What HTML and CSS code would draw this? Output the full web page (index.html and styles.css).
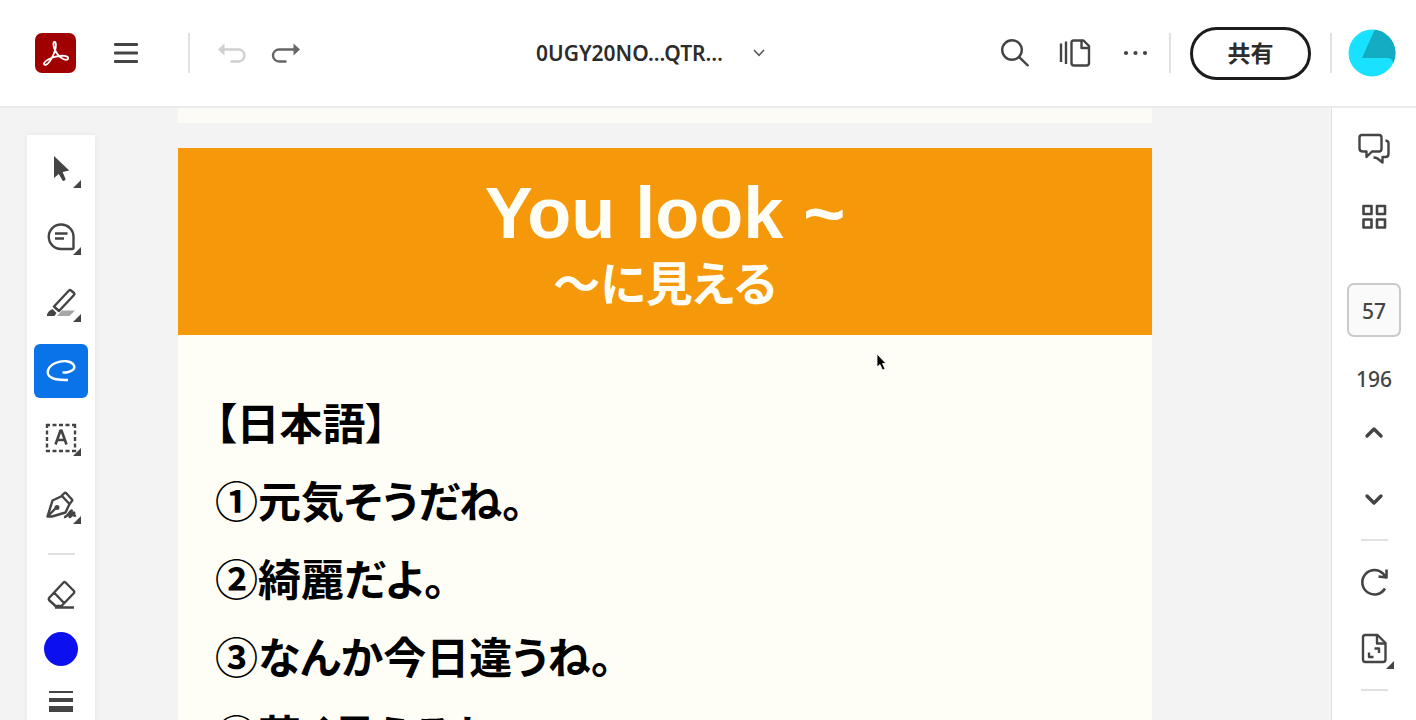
FILE: index.html
```html
<!DOCTYPE html>
<html lang="ja">
<head>
    <meta charset="UTF-8">
    <meta name="viewport" content="width=device-width, initial-scale=1.0">
    <title>0UGY20NO...QTR…</title>
    <link rel="stylesheet" href="styles.css">
</head>
<body>
    <header class="topbar">
        <a class="logo" href="#" aria-label="Acrobat">
            <svg width="41" height="40" viewBox="0 0 41 40">
                <rect width="41" height="40" rx="7" fill="#a00000"/>
                <path d="M19.5 9C17.6 9 18.4 14 20.2 17.5C21.8 20.6 25.5 25 29 26.3C31.5 27.1 33.6 26.6 33.2 24.8C32.5 22.4 26.5 22.4 22 23.4C17 24.4 10.5 27.2 9.2 29.8C8.5 31.2 9.7 32.2 11.2 31.7C14.2 30.5 18.2 23.3 20 17.5C21.2 13.6 21.4 9.3 19.5 9Z" fill="none" stroke="#fff" stroke-width="1.8"/>
            </svg>
        </a>
        <button class="icon-btn menu" aria-label="メニュー">
            <svg width="24" height="22" viewBox="0 0 24 22" fill="#444">
                <rect y="1" width="24" height="3" rx="1"/>
                <rect y="9.5" width="24" height="3" rx="1"/>
                <rect y="18" width="24" height="3" rx="1"/>
            </svg>
        </button>
        <span class="separator"></span>
        <button class="icon-btn undo" aria-label="元に戻す">
            <svg width="30" height="22" viewBox="0 0 30 22">
                <path d="M6 7.5H21.5A5.8 5.8 0 0 1 21.5 19.5H14.5" fill="none" stroke="currentColor" stroke-width="2.4" stroke-linecap="round"/>
                <path d="M1 7.5L7.5 1.5V13.5Z" fill="currentColor"/>
            </svg>
        </button>
        <button class="icon-btn redo" aria-label="やり直し">
            <svg width="30" height="22" viewBox="0 0 30 22">
                <path d="M23 7.5H8A5.8 5.8 0 0 0 8 19.5H14.5" fill="none" stroke="currentColor" stroke-width="2.4" stroke-linecap="round"/>
                <path d="M29 7.5L22.5 1.5V13.5Z" fill="currentColor"/>
            </svg>
        </button>

        <button class="doc-title">
            <span>0UGY20NO...QTR…</span>
            <svg width="12" height="8" viewBox="0 0 12 8"><path d="M1 1L6 6.3L11 1" fill="none" stroke="#555" stroke-width="1.5"/></svg>
        </button>

        <button class="icon-btn" aria-label="検索">
            <svg width="30" height="30" viewBox="0 0 30 30" fill="none" stroke="#444" stroke-width="2.4" stroke-linecap="round">
                <circle cx="12" cy="12" r="9.8"/>
                <path d="M19.2 19.2L27.7 27.3"/>
            </svg>
        </button>
        <button class="icon-btn" aria-label="ページ">
            <svg width="32" height="30" viewBox="0 0 32 30" fill="none" stroke="#444" stroke-width="2.4" stroke-linejoin="round">
                <path d="M2 5.5V24M7 3.5V26M14.5 2.5H24.5L30 8V25Q30 27.5 27.5 27.5H15Q12.5 27.5 12.5 25V4.5Q12.5 2.5 14.5 2.5Z"/>
                <path d="M22.5 2.5V10H30"/>
            </svg>
        </button>
        <button class="icon-btn" aria-label="その他">
            <svg width="26" height="6" viewBox="0 0 26 6" fill="#444">
                <circle cx="4" cy="3" r="2.1"/><circle cx="13.5" cy="3" r="2.1"/><circle cx="23" cy="3" r="2.1"/>
            </svg>
        </button>
        <span class="separator share-separator"></span>
        <button class="share">共有</button>
        <span class="separator"></span>
        <button class="avatar" aria-label="アカウント">
            <svg width="48" height="48" viewBox="0 0 48 48">
                <clipPath id="round"><circle cx="24" cy="24" r="23.5"/></clipPath>
                <g clip-path="url(#round)">
                    <rect width="48" height="48" fill="#18e2ff"/>
                    <path d="M27 0H48V36L45 34Q44 29 40 29H14Z" fill="#13acc2"/>
                </g>
            </svg>
        </button>
    </header>

    <div class="workspace">
        <aside class="tools">
            <button class="tool" aria-label="選択">
                <svg viewBox="0 0 54 54">
                    <path d="M20 13V35L24.8 31L28.2 37Q29.2 38.4 30.6 37.6T31.4 35.4L28.6 29L35.2 27.5Z" fill="#444" stroke="none"/>
                    <path class="corner" d="M47 37V45H39Z"/>
                </svg>
            </button>
            <button class="tool" aria-label="コメント">
                <svg viewBox="0 0 54 54">
                    <path d="M27 14.5A12.2 12.2 0 0 0 27 39H38Q39.5 39 39.5 37.5V26.5A12.3 12.3 0 0 0 27 14.5Z"/>
                    <path d="M21 23.5H33.5M21 28.5H30"/>
                    <path class="corner" d="M47 37V45H39Z"/>
                </svg>
            </button>
            <button class="tool" aria-label="ハイライト">
                <svg viewBox="0 0 54 54">
                    <path d="M23 39L28 33.5H41L35.5 39Z" fill="#a6a6a6" stroke="none"/>
                    <path d="M20 29.5L35 13.5Q36 12.5 37 13.5L40 16Q41 17 40 18L25 34L20 29.5Z"/>
                    <path d="M18.5 32L22.5 36L20.5 39H13Q12.5 36 16 33.5Z" fill="#444" stroke="none"/>
                    <path class="corner" d="M47 37V45H39Z"/>
                </svg>
            </button>
            <button class="tool active" aria-label="フリーハンド描画">
                <svg viewBox="0 0 54 54">
                    <path d="M28.5 28.5H32.5C38 27.5 41.5 25 40 21.5C37.5 16.5 28.5 16 21.5 19C13.5 22.5 11.5 29.5 16.5 33C21 36.5 28 36 34 36"/>
                </svg>
            </button>
            <button class="tool" aria-label="テキスト">
                <svg viewBox="0 0 54 54">
                    <path d="M12 14H42" stroke-dasharray="4 2.5"/>
                    <path d="M12 40H42" stroke-dasharray="4 2.5"/>
                    <path d="M13 13V41M41 13V41" stroke-dasharray="4 2.5"/>
                    <path d="M21.5 33.5L26.5 19.5H27.5L32.5 33.5M23.5 29H30.5" stroke-width="2.6"/>
                    <path class="corner" d="M47 37V45H39Z"/>
                </svg>
            </button>
            <button class="tool" aria-label="署名">
                <svg viewBox="0 0 54 54">
                    <path d="M13.5 38.5L18.5 22.5L28 18L35.5 26L31.5 34.5L18 38.5ZM13.5 38.5L22.5 29.5"/>
                    <circle cx="23" cy="29.5" r="1.3"/>
                    <path d="M27.5 18L30.5 15Q31.2 14.4 32 15L38 21.5Q38.6 22.3 38 23L35.5 26"/>
                    <path d="M30 39C33.5 39.5 36 32.5 37.5 32.5C39 32.5 34 39 36 39C38 39 39 34.5 40 34.5C41 34.5 38.5 39 42 37.5"/>
                    <path class="corner" d="M47 38V46H39Z"/>
                </svg>
            </button>
            <hr class="rule">
            <button class="tool" aria-label="消しゴム">
                <svg viewBox="0 0 54 54">
                    <path d="M29.5 14.5Q30.5 13.5 31.5 14.5L40 23Q40.5 24 40 25L27.5 38H21.5L15 32Q14.5 31 15 30ZM20 24.5L30 35M21 39.5H40"/>
                </svg>
            </button>
            <button class="tool" aria-label="カラー"><span class="swatch"></span></button>
            <button class="tool" aria-label="線の太さ">
                <svg viewBox="0 0 54 54">
                    <path d="M15 15H39V17H15ZM15 22H39V26H15ZM15 30H39V36H15Z" fill="#444" stroke="none"/>
                </svg>
            </button>
        </aside>

        <main class="canvas">
            <div class="page page-prev"></div>
            <article class="page">
                <div class="banner">
                    <h1>You look ~</h1>
                    <h2>～に見える</h2>
                </div>
                <div class="lines">
                    <p>【日本語】</p>
                    <p>①元気そうだね。</p>
                    <p>②綺麗だよ。</p>
                    <p>③なんか今日違うね。</p>
                    <p>④若く見えるね。</p>
                </div>
                <svg class="pointer" width="14" height="19" viewBox="0 0 14 19">
                    <path d="M2 1V14L5 11.5L7.5 17L10 16L7.5 10.5H11Z" fill="#000" stroke="#fff" stroke-width=".8"/>
                </svg>
            </article>
        </main>

        <aside class="side">
            <button class="tool" aria-label="コメント一覧">
                <svg viewBox="0 0 54 54">
                    <path d="M15 13H32Q34.5 13 34.5 15.5V27Q34.5 29.5 32 29.5H25L19.5 35V29.5H16Q12.5 29.5 12.5 26.5V15.5Q12.5 13 15 13Z"/>
                    <path d="M38.5 18.5Q41.5 19 41.5 21V32Q41.5 35 38.5 35H35.5V40.5L30.5 36.5Q29 35.5 26.5 35.5"/>
                </svg>
            </button>
            <button class="tool" aria-label="ページサムネール">
                <svg viewBox="0 0 54 54">
                    <path d="M16.5 17H24.5V25H16.5ZM30 17H38V25H30ZM16.5 30.5H24.5V38.5H16.5ZM30 30.5H38V38.5H30Z" stroke-width="2.6"/>
                </svg>
            </button>
            <input class="page-number" type="text" value="57" aria-label="ページ番号">
            <span class="page-count">196</span>
            <button class="tool" aria-label="前のページ">
                <svg viewBox="0 0 54 54"><path d="M20 31L27 24L34 31" stroke-width="3.4" stroke-linecap="round"/></svg>
            </button>
            <button class="tool" aria-label="次のページ">
                <svg viewBox="0 0 54 54"><path d="M20 24L27 31L34 24" stroke-width="3.4" stroke-linecap="round"/></svg>
            </button>
            <hr class="rule">
            <button class="tool" aria-label="回転">
                <svg viewBox="0 0 54 54">
                    <path d="M38 33.5A12.2 12.2 0 1 1 36 18.5L39 22.5M39.5 14.5V22.5L31.5 21.5" stroke-width="2.6"/>
                </svg>
            </button>
            <button class="tool" aria-label="ページに合わせる">
                <svg viewBox="0 0 54 54">
                    <path d="M18.5 13H30.5L38.5 21V37.5Q38.5 40 36 40H18.5Q16 40 16 37.5V15.5Q16 13 18.5 13Z"/>
                    <path d="M30 13V21.5H38.5M27.5 26.5H32V31M22 30.5V35H26.5"/>
                    <path class="corner" d="M47 39V47H39Z"/>
                </svg>
            </button>
            <hr class="rule">
        </aside>
    </div>
</body>
</html>
```

FILE: styles.css
```css
* {
    box-sizing: border-box;
}

body {
    margin: 0;
    height: 100vh;
    display: flex;
    flex-direction: column;
    overflow: hidden;
    background-color: #f3f3f3;
    color: #2c2c2c;
    font-family: "Noto Sans", "Noto Sans CJK JP", sans-serif;
}

button {
    padding: 0;
    border: none;
    background: none;
    color: inherit;
    font-family: inherit;
    cursor: pointer;
}

svg {
    display: block;
}

/* top bar */
.topbar {
    display: flex;
    flex: none;
    align-items: center;
    height: 108px;
    padding: 0 20px 0 35px;
    background-color: #fff;
    border-bottom: 2px solid #ebebeb;
}

.icon-btn {
    display: flex;
    align-items: center;
    justify-content: center;
    width: 40px;
    height: 40px;
    margin-right: 20px;
}

.menu {
    margin: 0 42px 0 30px;
}

.undo {
    margin: 0 14px 0 22px;
    color: #d0d0d0;
}

.redo {
    margin: 0;
    color: #666;
}

.separator {
    width: 2px;
    height: 40px;
    background-color: #e1e1e1;
}

.share-separator {
    margin-left: -6px;
}

.doc-title {
    display: flex;
    align-items: center;
    gap: 30px;
    margin: 0 auto;
    font-size: 21px;
    font-weight: 600;
}

.share {
    width: 121px;
    height: 53px;
    margin: 0 19px;
    border: 3px solid #1c1c1c;
    border-radius: 27px;
    font-size: 23px;
    font-weight: 700;
    line-height: 32px;
}

.avatar {
    margin-left: 16px;
}

/* workspace */
.workspace {
    display: flex;
    flex: 1;
    min-height: 0;
}

.tools,
.side {
    display: flex;
    flex: none;
    flex-direction: column;
    align-items: center;
    background-color: #fff;
}

.tools {
    align-self: flex-start;
    gap: 13px;
    width: 68px;
    margin: 27px 0 0 27px;
    padding: 8px 7px;
    box-shadow: 0 0 6px rgba(0, 0, 0, 0.06);
}

.tool {
    display: flex;
    flex: none;
    align-items: center;
    justify-content: center;
    width: 54px;
    height: 54px;
    border-radius: 6px;
}

.tool svg {
    width: 54px;
    height: 54px;
    fill: none;
    stroke: #444;
    stroke-width: 2.4;
    stroke-linejoin: round;
}

.tool svg .corner {
    fill: #444;
    stroke: none;
}

.tool.active {
    background-color: #0b73e8;
}

.tool.active svg {
    stroke: #fff;
}

.rule {
    flex: none;
    width: 27px;
    height: 2px;
    margin: 0;
    border: none;
    background-color: #e1e1e1;
}

.tools .rule {
    margin: 8px 0 0;
}

.tools .rule ~ .tool {
    margin-bottom: -13px;
}

.swatch {
    width: 34px;
    height: 34px;
    border-radius: 50%;
    background-color: #0c10ee;
}

.canvas {
    flex: 1;
    min-width: 0;
    margin: 0 179px 0 83px;
}

.page {
    position: relative;
    background-color: #fffef6;
}

.page-prev {
    height: 15px;
    margin-bottom: 25px;
    background-color: #fcfbf5;
}

.banner {
    padding: 25px 0 18px;
    background-color: #f59809;
    color: #fffef6;
    text-align: center;
}

.banner h1,
.banner h2 {
    margin: 0;
    font-family: "Liberation Sans", "Noto Sans CJK JP", sans-serif;
    font-weight: 700;
}

.banner h1 {
    font-size: 72px;
    line-height: 80px;
}

.banner h2 {
    font-size: 47px;
    line-height: 64px;
    font-feature-settings: "palt";
}

.lines {
    padding: 47px 37px;
    color: #000;
    font-family: "Noto Sans CJK JP", sans-serif;
    font-size: 43px;
    font-weight: 700;
    line-height: 78px;
    font-feature-settings: "palt";
}

.lines p {
    margin: 0;
}

.pointer {
    position: absolute;
    top: 205px;
    left: 697px;
}

/* right panel */
.side {
    gap: 13px;
    width: 85px;
    padding-top: 14px;
    border-left: 1px solid #e1e1e1;
}

.page-number {
    width: 54px;
    height: 54px;
    margin-top: 27px;
    padding: 2px 0 0;
    border: 2px solid #cacaca;
    border-radius: 7px;
    background-color: #fafafa;
    color: #444;
    font-family: inherit;
    font-size: 21px;
    font-weight: 500;
    text-align: center;
}

.page-count {
    margin-top: 15px;
    color: #444;
    font-size: 21px;
    font-weight: 500;
    line-height: 28px;
}

.page-count + .tool {
    margin-top: -1px;
}

.side .rule {
    margin-bottom: 1px;
}
```
